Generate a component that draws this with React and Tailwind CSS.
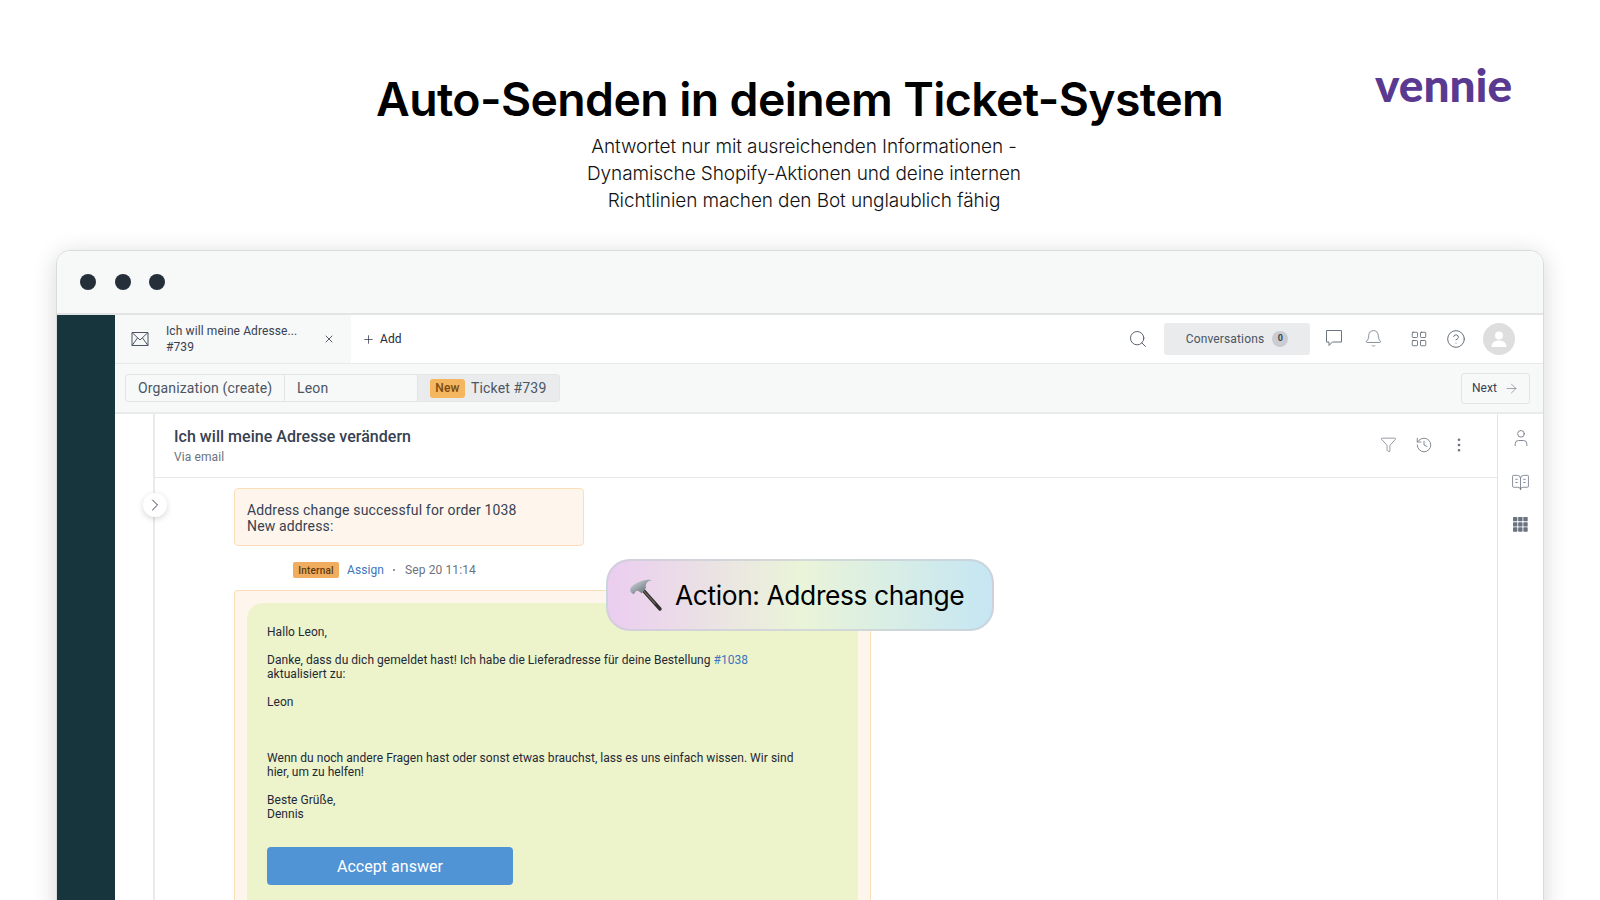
import React from 'react'
import {
  ArrowRight,
  Bell,
  BookOpenText,
  ChevronRight,
  CircleHelp,
  EllipsisVertical,
  Funnel,
  History,
  LayoutGrid,
  Plus,
  Search,
  User,
  X,
} from 'lucide-react'

const roboto = "font-['Roboto','Liberation_Sans',sans-serif]"

function Hammer() {
  return (
    <svg width="36" height="36" viewBox="0 0 36 36" className="shrink-0">
      <defs>
        <linearGradient id="steel" x1="0" y1="0" x2="1" y2="1">
          <stop offset="0" stopColor="#dfe3e6" />
          <stop offset="0.55" stopColor="#8d979e" />
          <stop offset="1" stopColor="#59636b" />
        </linearGradient>
      </defs>
      <path d="M15 12 L32 31" stroke="#2f2f2f" strokeWidth="3.4" strokeLinecap="round" />
      <path d="M15 12 L27 25.5" stroke="#6b6459" strokeWidth="1.2" strokeLinecap="round" />
      <path
        d="M2 12 C3 8 6 6 9 5 C13 2.5 18 1 24 2 C19 3 17 6 18 10 L13.5 15.5 C11.5 13.5 10 12.5 8 13 L6 16 C4 16 2.5 14 2 12 Z"
        fill="url(#steel)"
      />
    </svg>
  )
}

function Apps() {
  const cells = [0, 5, 10]
  return (
    <svg width="15" height="15" viewBox="0 0 14.5 14.5" fill="#6b7280">
      {cells.map(y =>
        cells.map(x => <rect key={`${x}-${y}`} x={x} y={y} width="4.2" height="4.2" rx="0.6" />)
      )}
    </svg>
  )
}

function Envelope() {
  return (
    <svg width="18" height="16" viewBox="0 0 18 16" fill="none" stroke="#4b5563" strokeWidth="1" strokeLinejoin="round">
      <rect x="1" y="1.5" width="16" height="13" />
      <path d="M1 1.5 L9 9 L17 1.5 M1 14.5 L6.5 7 M17 14.5 L11.5 7" />
    </svg>
  )
}

function ChatBubble() {
  return (
    <svg width="18" height="18" viewBox="0 0 18 18" fill="none" stroke="#6b7280" strokeWidth="1" strokeLinejoin="round" className="-mt-[3px] ml-[15px]">
      <path d="M1.5 1.5 H16.5 V13 H7.5 L4 16.5 V13 H1.5 Z" />
    </svg>
  )
}

function Avatar() {
  return (
    <div className="flex h-8 w-8 items-center justify-center rounded-full bg-[#dedede]">
      <svg width="18" height="18" viewBox="0 0 18 18" fill="#ffffff">
        <circle cx="9" cy="5.5" r="4" />
        <path d="M1.5 17 C1.5 12.5 5 10.5 9 10.5 C13 10.5 16.5 12.5 16.5 17 Z" />
      </svg>
    </div>
  )
}

function TopBar() {
  return (
    <div className="flex h-[49px] items-stretch border-b border-[#e6e8e9] bg-white">
      <div className="flex w-[236px] items-center bg-[#f7f8f8] pl-[16px]">
        <Envelope />
        <div className="ml-[17px] w-[146px] text-[12px] leading-[16px] tracking-[0.1px] text-[#374151]">
          <div>Ich will meine Adresse...</div>
          <div>#739</div>
        </div>
        <X size={12} strokeWidth={1.5} className="ml-[11px] text-[#1f2937]" />
      </div>
      <div className="ml-[11px] flex items-center gap-[5px] text-[12px] tracking-[0.1px] text-[#1f2937]">
        <Plus size={13} strokeWidth={1.3} />
        Add
      </div>
      <div className="ml-auto flex items-center pr-[28px] text-[#4b5563]">
        <Search size={20} strokeWidth={1.1} />
        <div className="ml-[16px] flex h-[32px] w-[146px] items-center justify-center gap-[8px] rounded-[3px] bg-[#e9ebec] text-[12px] tracking-[0.15px] text-[#4b5563]">
          Conversations
          <span className="flex h-[16px] w-[16px] items-center justify-center rounded-full bg-[#c9cdd2] text-[9px] font-bold text-[#374151]">
            0
          </span>
        </div>
        <ChatBubble />
        <Bell size={19} strokeWidth={1} className="ml-[21px] -mt-[1px] text-[#6b7280]" />
        <LayoutGrid size={18} strokeWidth={1} className="ml-[27px] text-[#4b5563]" />
        <CircleHelp size={20} strokeWidth={1} className="ml-[18px]" />
        <div className="ml-[17px]">
          <Avatar />
        </div>
      </div>
    </div>
  )
}

function TicketTabs() {
  return (
    <div className="flex h-[50px] items-center border-b-2 border-[#e8eaeb] bg-[#f7f8f8] pl-[10px] pr-[13px]">
      <div className="flex h-[28px] items-stretch overflow-hidden rounded-[3px] border border-[#e2e4e6] text-[14px] tracking-[0.15px] text-[#4b5563]">
        <div className="flex w-[159px] items-center border-r border-[#e2e4e6] pl-[12px]">Organization (create)</div>
        <div className="flex w-[133px] items-center border-r border-[#e2e4e6] pl-[12px]">Leon</div>
        <div className="flex w-[141px] items-center bg-[#e9ebec] pl-[12px]">
          <span className="flex h-[19px] w-[35px] items-center justify-center rounded-[3px] bg-[#f4b65f] text-[12px] font-medium text-[#7c4a12]">
            New
          </span>
          <span className="ml-[6px]">Ticket #739</span>
        </div>
      </div>
      <div className="ml-auto flex h-[31px] w-[69px] items-center justify-center gap-[7px] rounded-[3px] border border-[#e2e4e6] text-[12px] tracking-[0.1px] text-[#374151]">
        Next
        <ArrowRight size={15} strokeWidth={1} className="text-[#6b7280]" />
      </div>
    </div>
  )
}

function ConversationHeader() {
  return (
    <div className="flex h-[64px] items-center border-b border-[#e6e8e9] pl-[19px] pr-[29px]">
      <div>
        <div className="text-[16px] leading-[22px] font-medium tracking-[0.03px] text-[#374151]">Ich will meine Adresse verändern</div>
        <div className="mt-[1px] text-[12px] leading-[16px] tracking-[0.1px] text-[#6b7280]">Via email</div>
      </div>
      <div className="ml-auto -mt-[2px] flex items-center text-[#6b7280]">
        <Funnel size={17} strokeWidth={1} />
        <History size={18} strokeWidth={1.1} className="ml-[18px]" />
        <EllipsisVertical size={18} strokeWidth={1.6} className="ml-[17px]" />
      </div>
    </div>
  )
}

function Reply() {
  return (
    <div className="mt-[12px] w-[637px] rounded-t-[4px] border border-b-0 border-[#fbdfb9] bg-[#fef6ec] px-[12px] pt-[12px]">
      <div className="h-[320px] rounded-[16px] bg-[#edf3ca] px-[20px] pt-[22px] text-[12px] leading-[14px] tracking-[0.04px] text-[#1f2937]">
        <p>Hallo Leon,</p>
        <p className="mt-[14px] w-[535px]">
          Danke, dass du dich gemeldet hast! Ich habe die Lieferadresse für deine Bestellung{' '}
          <span className="text-[#3b76bd]">#1038</span> aktualisiert zu:
        </p>
        <p className="mt-[14px]">Leon</p>
        <p className="mt-[42px] w-[535px]">
          Wenn du noch andere Fragen hast oder sonst etwas brauchst, lass es uns einfach wissen. Wir sind hier, um zu
          helfen!
        </p>
        <p className="mt-[14px]">
          Beste Grüße,
          <br />
          Dennis
        </p>
        <button className="mt-[26px] flex h-[38px] w-[246px] items-center justify-center rounded-[4px] bg-[#5094d6] pt-[2px] text-[16px] font-normal text-white">
          Accept answer
        </button>
      </div>
    </div>
  )
}

function Conversation() {
  return (
    <div className="relative ml-[38px] flex min-w-0 flex-1 flex-col border-l-2 border-[#e8eaeb]">
      <ConversationHeader />
      <div className="pl-[79px] pt-[10px]">
        <div className="h-[58px] w-[350px] rounded-[4px] border border-[#fbdfb9] bg-[#fef6ec] pl-[12px] pt-[13px] text-[14px] leading-[16px] tracking-[0.15px] text-[#374151]">
          Address change successful for order 1038
          <br />
          New address:
        </div>
        <div className="mt-[16px] ml-[59px] flex h-[16px] items-center text-[12px] tracking-[0.1px]">
          <span className="flex h-[16px] w-[46px] items-center justify-center rounded-[2px] bg-[#f0ad5f] text-[10px] font-medium tracking-[0.2px] text-[#5f3a10]">
            Internal
          </span>
          <span className="ml-[8px] text-[#3b76bd]">Assign</span>
          <span className="ml-[9px] h-[2px] w-[2px] rounded-full bg-[#6b7280]" />
          <span className="ml-[10px] text-[#6b7280]">Sep 20 11:14</span>
        </div>
        <Reply />
      </div>
      <div className="absolute left-[-12px] top-[79px] flex h-[24px] w-[24px] items-center justify-center rounded-full bg-white shadow-[0_2px_6px_rgba(0,0,0,0.16)]">
        <ChevronRight size={20} strokeWidth={1.2} className="text-[#374151]" />
      </div>
    </div>
  )
}

function SideRail() {
  return (
    <div className="flex w-[46px] shrink-0 flex-col items-center gap-[25px] border-l border-[#e2e4e6] pt-[14px] text-[#6b7280]">
      <User size={20} strokeWidth={1} />
      <BookOpenText size={19} strokeWidth={1} />
      <Apps />
    </div>
  )
}

export default function App() {
  return (
    <div className={`h-[900px] w-[1600px] overflow-hidden bg-white ${roboto}`}>
      <header className="flex h-[250px] items-start pt-[70px]">
        <div className="ml-[376px] w-[860px] text-black">
          <h1 className="font-['Inter',sans-serif] text-[46.4px] leading-[58px] font-semibold tracking-[-0.6px] whitespace-nowrap">
            Auto-Senden in deinem Ticket-System
          </h1>
          <p className="mt-[5px] w-[856px] text-center font-['Inter',sans-serif] text-[19px] leading-[27px] font-light tracking-[-0.1px] text-[#111]">
            Antwortet nur mit ausreichenden Informationen -
            <br />
            Dynamische Shopify-Aktionen und deine internen
            <br />
            Richtlinien machen den Bot unglaublich fähig
          </p>
        </div>
        <div className="ml-[139px] mt-[-14px] font-['Lato',sans-serif] text-[46px] leading-[58px] font-black text-[#5a3a91]">
          vennie
        </div>
      </header>

      <div className="relative ml-[56px] h-[700px] w-[1488px] overflow-hidden rounded-t-[14px] border border-[#d8dadb] bg-white shadow-[0_4px_24px_rgba(0,0,0,0.16)]">
        <div className="flex h-[64px] items-center gap-[18.5px] border-b-2 border-[#e2e4e5] bg-[#f7f8f8] pl-[23px]">
          <span className="h-[16px] w-[16px] rounded-full bg-[#252f39]" />
          <span className="h-[16px] w-[16px] rounded-full bg-[#252f39]" />
          <span className="h-[16px] w-[16px] rounded-full bg-[#252f39]" />
        </div>
        <div className="flex h-[636px]">
          <div className="w-[58px] shrink-0 bg-[#17353d]" />
          <div className="flex min-w-0 flex-1 flex-col">
            <TopBar />
            <TicketTabs />
            <div className="flex min-h-0 flex-1">
              <Conversation />
              <SideRail />
            </div>
          </div>
        </div>

        <div className="absolute left-[549px] top-[308px] flex h-[72px] w-[388px] items-center gap-[11px] rounded-[24px] border-2 border-[#c9cdd6]/70 bg-gradient-to-r from-[#ebcdf0] via-[#eaf4d8] to-[#c5e6f3] pl-[20px] pt-[1px] font-['Inter',sans-serif] text-[26.4px] tracking-[-0.4px] text-black">
          <Hammer />
          Action: Address change
        </div>
      </div>
    </div>
  )
}
